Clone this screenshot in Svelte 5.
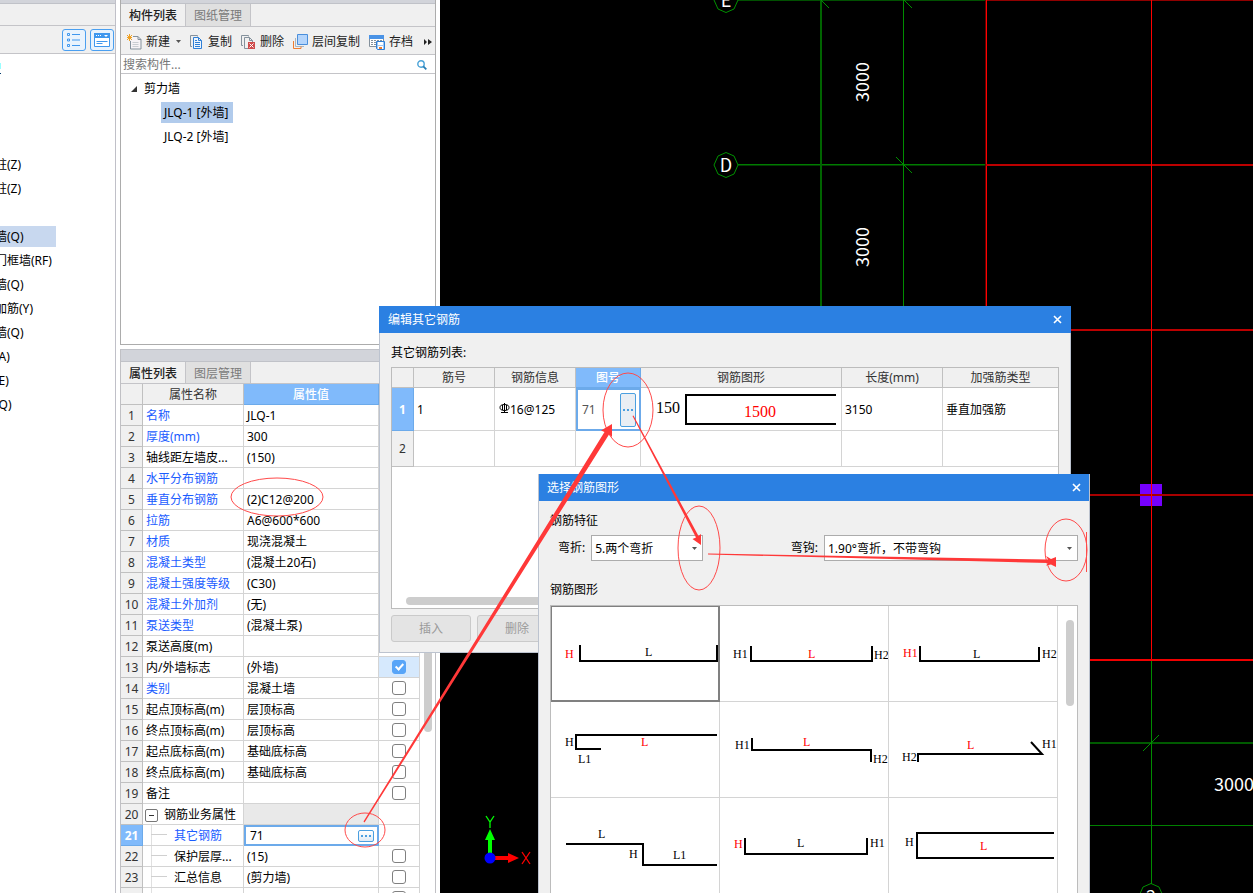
<script>
  const categories = [
    { name: '柱(Z)' },
    { name: '柱(Z)' },
    { name: '' },
    { name: '墙(Q)', active: true },
    { name: '门框墙(RF)' },
    { name: '墙(Q)' },
    { name: '加筋(Y)' },
    { name: '墙(Q)' },
    { name: '(A)' },
    { name: '(E)' },
    { name: '(Q)' }
  ];

  const properties = [
    { name: '名称', value: 'JLQ-1', blue: true },
    { name: '厚度(mm)', value: '300', blue: true },
    { name: '轴线距左墙皮...', value: '(150)' },
    { name: '水平分布钢筋', value: '', blue: true },
    { name: '垂直分布钢筋', value: '(2)C12@200', blue: true },
    { name: '拉筋', value: 'A6@600*600', blue: true },
    { name: '材质', value: '现浇混凝土', blue: true },
    { name: '混凝土类型', value: '(混凝土20石)', blue: true },
    { name: '混凝土强度等级', value: '(C30)', blue: true },
    { name: '混凝土外加剂', value: '(无)', blue: true },
    { name: '泵送类型', value: '(混凝土泵)', blue: true },
    { name: '泵送高度(m)', value: '' },
    { name: '内/外墙标志', value: '(外墙)', check: true, checked: true },
    { name: '类别', value: '混凝土墙', blue: true, check: true },
    { name: '起点顶标高(m)', value: '层顶标高', check: true },
    { name: '终点顶标高(m)', value: '层顶标高', check: true },
    { name: '起点底标高(m)', value: '基础底标高', check: true },
    { name: '终点底标高(m)', value: '基础底标高', check: true },
    { name: '备注', value: '', check: true },
    { name: '钢筋业务属性', value: '', group: true },
    { name: '其它钢筋', value: '71', blue: true, child: true, editing: true },
    { name: '保护层厚...', value: '(15)', child: true, check: true },
    { name: '汇总信息', value: '(剪力墙)', child: true, check: true },
    { name: '', value: '', child: true, check: true }
  ];

  // Each label is [text, x, baseline, isRed]
  const shapes = [
    { d: 'M29 39V55H166V39', labels: [['H', 14, 52, true], ['L', 94, 50]] },
    { d: 'M31 40V55H152V40', labels: [['H1', 13, 52], ['L', 88, 52, true], ['H2', 154, 53]] },
    { d: 'M31 40V55H150V41', labels: [['H1', 14, 51, true], ['L', 84, 52], ['H2', 153, 52]] },
    { d: 'M166 33H25V47H50', labels: [['H', 14, 44], ['L', 90, 44, true], ['L1', 27, 61]] },
    { d: 'M32 36V48H151V60', labels: [['H1', 15, 47], ['L', 83, 44, true], ['H2', 153, 61]] },
    { d: 'M29 60V52H153L142 40', labels: [['H2', 13, 59], ['L', 78, 47, true], ['H1', 153, 46]] },
    { d: 'M15 46H92V67H166', labels: [['L', 47, 40], ['H', 78, 60], ['L1', 122, 61]] },
    { d: 'M25 40V56H147V40', labels: [['H', 14, 50, true], ['L', 77, 49], ['H1', 150, 49]] },
    { d: 'M165 35H28V60H165', labels: [['H', 16, 48], ['L', 91, 52, true]] }
  ];

  let selected = $state(0);
</script>

<div class="app">
  <aside class="modules">
    <div class="strip short"></div>
    <div class="module-tabs"></div>
    <div class="module-tools">
      <button class="view" aria-label="列表视图">
        <svg width="14" height="14" viewBox="0 0 14 14" fill="none" stroke="#3f97ee">
          <path d="M.5 .5h2v2h-2zM.5 6h2v2h-2zM.5 11.5h2v2h-2zM5 1.5h8M5 7h8M5 12.5h8" />
        </svg>
      </button>
      <button class="view" aria-label="面板视图">
        <svg width="16" height="14" viewBox="0 0 16 14">
          <path d="M.5 .5h15v13H.5z" fill="#fff" stroke="#3f97ee" />
          <path d="M0 0h16v5H0z" fill="#3f97ee" />
          <path d="M2.500 8.500h11M2.500 10.500h6" stroke="#3f97ee" />
          <path d="M2 2h1v1H2zM4 2h1v1H4zM6 2h1v1H6zM10 2h4l-2 2z" fill="#fff" />
        </svg>
      </button>
    </div>
    <div class="mark"></div>
    <ul class="categories">
      {#each categories as item}
        <li class:active={item.active}><span>{item.name}</span></li>
      {/each}
    </ul>
  </aside>

  <div class="panels">
    <section class="panel components">
      <div class="strip short"></div>
      <div class="tabs">
        <button class="tab on">构件列表</button>
        <button class="tab">图纸管理</button>
      </div>
      <div class="toolbar">
        <button>
          <svg width="15" height="16" viewBox="0 0 15 16" fill="none">
            <path d="M6 2.500h5l3 3v9.500H3.500V7" fill="#f6f3f6" stroke="#84919c" />
            <path d="M11 2.500v3h3" stroke="#84919c" />
            <path d="M5.500 8.500h6M5.500 10.500h6M5.500 12.500h6" stroke="#c9cdd2" />
            <path d="M0 1l5 5M5 1l-5 5M2.500 0v7M0 3.500h5" stroke="#f0a020" stroke-width="1" />
          </svg>
          新建
          <svg class="drop" width="5" height="3" viewBox="0 0 5 3"><path d="M0 0h5L2.500 3z" fill="#555" /></svg>
        </button>
        <button>
          <svg width="14" height="16" viewBox="0 0 14 16" fill="none">
            <path d="M2 12.500H.5V1.500h7v1" stroke="#84919c" />
            <path d="M3.500 3.500h5l3 3v8h-8z" fill="#eef5fd" stroke="#2e7fd6" />
            <path d="M5 6.500h2M5 8.500h5M5 10.500h5M5 12.500h5M8.500 3.500v3h3" stroke="#2e7fd6" />
          </svg>
          复制
        </button>
        <button>
          <svg width="15" height="16" viewBox="0 0 15 16" fill="none">
            <path d="M2 11.500H.5V1.500h7v1" stroke="#84919c" />
            <path d="M7 14.500H3.500v-11h5l3 3V8M8.500 3.500v3h3" stroke="#84919c" />
            <path d="M7 8h7v7H7z" fill="#cf4b4b" />
            <path d="M8.500 9.500l4 4M12.500 9.500l-4 4" stroke="#fff" />
          </svg>
          删除
        </button>
        <button>
          <svg width="15" height="16" viewBox="0 0 15 16" fill="none">
            <path d="M4.500 .5h10v10h-10z" fill="#b5d5fb" stroke="#4a8fdc" />
            <path d="M2.500 4v8.500H11" stroke="#a9b4bf" />
            <path d="M.5 7v7.500H8v-2" stroke="#ee7d31" />
          </svg>
          层间复制
        </button>
        <button>
          <svg width="16" height="16" viewBox="0 0 16 16" fill="none">
            <path d="M.5 1.500h14v11H.5z" fill="#fff" stroke="#84919c" />
            <path d="M0 1h15v4H0z" fill="#4a93e6" />
            <path d="M2 6.500h2M2 8.500h2M2 10.500h2M5 6.500h2M5 8.500h2M5 10.500h2M8 6.500h2M11 6.500h2" stroke="#84919c" />
            <path d="M7.500 7.500h8v8h-7l-1-1z" fill="#9cc6f5" stroke="#2e7fd6" />
            <path d="M9 8h5v3H9z" fill="#fff" />
            <path d="M9 12h5v3H9z" fill="#fff" />
            <path d="M10 13h3v2h-3z" fill="#ee7d31" />
          </svg>
          存档
        </button>
        <button class="more" aria-label="更多">
          <svg width="8" height="6" viewBox="0 0 8 6"><path d="M0 0l3 3-3 3zM4 0l4 3-4 3z" fill="#222" /></svg>
        </button>
      </div>
      <label class="search">
        <input type="text" placeholder="搜索构件..." aria-label="搜索构件" />
        <svg width="10" height="10" viewBox="0 0 10 10" fill="none">
          <circle cx="4" cy="4" r="3.200" stroke="#4aa3d8" stroke-width="1.400" />
          <path d="M6.300 6.300L9.300 9.300" stroke="#2a7fb5" stroke-width="1.800" />
        </svg>
      </label>
      <div class="tree">
        <div class="branch">
          <svg width="6" height="6" viewBox="0 0 6 6"><path d="M6 0v6H0z" fill="#333" /></svg>
          剪力墙
        </div>
        <button class="leaf on">JLQ-1 [外墙]</button>
        <button class="leaf">JLQ-2 [外墙]</button>
      </div>
    </section>

    <section class="panel attributes">
      <div class="strip"></div>
      <div class="tabs">
        <button class="tab on">属性列表</button>
        <button class="tab">图层管理</button>
      </div>
      <div class="sheet">
        <table class="props">
          <colgroup><col class="c-no" /><col class="c-name" /><col class="c-value" /><col class="c-check" /></colgroup>
          <thead>
            <tr><th></th><th>属性名称</th><th class="hot">属性值</th><th></th></tr>
          </thead>
          <tbody>
            {#each properties as row, i}
              <tr>
                <th class:hot={row.editing}>{i < 23 ? i + 1 : ''}</th>
                <td class:blue={row.blue} class:child={row.child}>
                  {#if row.group}<button class="fold" aria-label="折叠"></button>{/if}{row.name}
                </td>
                <td class:shade={row.group} class:editing={row.editing}>
                  {#if row.editing}
                    <div class="edit">
                      <span>{row.value}</span>
                      <button class="dots" aria-label="选择"><i></i><i></i><i></i></button>
                    </div>
                  {:else}
                    {row.value}
                  {/if}
                </td>
                <td class="tick" class:lit={row.checked}>
                  {#if row.check}
                    <input type="checkbox" checked={row.checked} aria-label={row.name || '附加'} />
                  {/if}
                </td>
              </tr>
            {/each}
          </tbody>
        </table>
        <div class="vbar"><div class="thumb"></div></div>
      </div>
    </section>
  </div>

  <main class="drawing">
    <svg width="100%" height="100%">
      <g transform="translate(-440 0)" shape-rendering="crispEdges">
        <path d="M738 0h248v1H738z" fill="#005000" />
        <path d="M986 0h3000v1H986z" fill="#900000" />
        <path d="M738 164h248v1H738z" fill="#007c00" />
        <path d="M738 165h248v1H738z" fill="#003c00" />
        <path d="M820 0h2v600h-2z" fill="#006400" />
        <path d="M903 0h1v600h-1z" fill="#008c00" />
        <path d="M1090 742h3000v2H1090z" fill="#005a00" />
        <path d="M1090 825h3000v1H1090z" fill="#008000" />
        <path d="M1151 660h1v224h-1z" fill="#008c00" />
        <path d="M985 0h1v600h-1z" fill="#600000" />
        <path d="M986 0h1v600h-1z" fill="#ff0000" />
        <path d="M986 164h3000v2H986zM1000 329h3000v2H1000z" fill="#bc0000" />
        <path d="M1140 484h22v22h-22z" fill="#7600ff" />
        <path d="M1000 494h3000v2H1000z" fill="#a80000" />
        <path d="M1151 0h1v660h-1z" fill="#ff0000" />
        <path d="M1000 659h3000v2H1000z" fill="#f00000" />
      </g>
      <g transform="translate(-440 0)" fill="none" stroke="#009000">
        <path d="M821 0l8 8M904 0l8 8M896 157l16 16M1143 751l16-16" />
        <path d="M726 152.500l8 3.500 4 9-4 9-8 3.500-8-3.500-4-9 4-9z" />
        <path d="M726-12.500l8 3.500 4 9-4 9-8 3.500-8-3.500-4-9 4-9z" />
        <path d="M1151 883.500l8 3.500 4 9-4 9-8 3.500-8-3.500-4-9 4-9z" />
      </g>
      <g transform="translate(-440 0)" class="cad">
        <text x="726" y="7" text-anchor="middle">E</text>
        <text x="726" y="172" text-anchor="middle">D</text>
        <text x="1151" y="903" text-anchor="middle">2</text>
        <text x="1214" y="791">3000</text>
        <text transform="translate(869 102) rotate(-90)">3000</text>
        <text transform="translate(869 267) rotate(-90)">3000</text>
      </g>
      <g transform="translate(-440 0)">
        <path d="M488 858V840h-3l5-11 5 11h-3v18z" fill="#0f0" />
        <path d="M490 856h18v-3l11 5-11 5v-3h-18z" fill="red" />
        <circle cx="490" cy="858" r="5.500" fill="#00f" />
        <path d="M486 816l4 6 4-6M490 822v6" fill="none" stroke="#0f0" stroke-width="1.300" />
        <path d="M522 852l8 12M530 852l-8 12" fill="none" stroke="red" stroke-width="1.300" />
      </g>
    </svg>
  </main>

  <section class="window rebar" aria-label="编辑其它钢筋">
    <header>
      <span>编辑其它钢筋</span>
      <button aria-label="关闭"><svg width="9" height="9" viewBox="0 0 9 9"><path d="M1 1l7 7M8 1L1 8" stroke="#fff" stroke-width="1.600" /></svg></button>
    </header>
    <div class="body">
      <p>其它钢筋列表:</p>
      <div class="list">
        <table class="bars">
          <colgroup><col class="b-no" /><col class="b-id" /><col class="b-id" /><col class="b-fig" /><col class="b-shape" /><col class="b-len" /><col /></colgroup>
          <thead>
            <tr><th></th><th>筋号</th><th>钢筋信息</th><th class="hot">图号</th><th>钢筋图形</th><th>长度(mm)</th><th>加强筋类型</th></tr>
          </thead>
          <tbody>
            <tr class="first">
              <th class="hot">1</th>
              <td>1</td>
              <td class="steel">
                <svg width="11" height="11" viewBox="0 0 11 11" fill="none" stroke="#000"><ellipse cx="5.500" cy="4.500" rx="4.500" ry="3" /><path d="M5.500 0v10M3.500 2v5M7.500 2v5M2 9.500h7" /></svg>16@125
              </td>
              <td class="editing">
                <div class="edit">
                  <span>71</span>
                  <button class="dots tall" aria-label="选择图号"><i></i><i></i><i></i></button>
                </div>
              </td>
              <td class="figure">
                <svg width="200" height="42">
                  <path d="M195 7H45V36H195" fill="none" stroke="#000" stroke-width="2" />
                  <text x="15" y="25">150</text>
                  <text x="103" y="29" class="red">1500</text>
                </svg>
              </td>
              <td>3150</td>
              <td>垂直加强筋</td>
            </tr>
            <tr class="second"><th>2</th><td></td><td></td><td></td><td></td><td></td><td></td></tr>
          </tbody>
        </table>
        <div class="hbar"></div>
      </div>
      <div class="actions">
        <button disabled>插入</button>
        <button disabled>删除</button>
      </div>
    </div>
  </section>

  <section class="window picker" aria-label="选择钢筋图形">
    <header>
      <span>选择钢筋图形</span>
      <button aria-label="关闭"><svg width="9" height="9" viewBox="0 0 9 9"><path d="M1 1l7 7M8 1L1 8" stroke="#fff" stroke-width="1.600" /></svg></button>
    </header>
    <div class="body">
      <p>钢筋特征</p>
      <div class="filters">
        <label for="bend">弯折:</label>
        <div class="combo narrow">
          <select id="bend"><option>5.两个弯折</option></select>
          <svg width="5" height="3" viewBox="0 0 5 3"><path d="M0 0h5L2.500 3z" fill="#555" /></svg>
        </div>
        <label for="hook" class="push">弯钩:</label>
        <div class="combo wide">
          <select id="hook"><option>1.90°弯折，不带弯钩</option></select>
          <svg width="5" height="3" viewBox="0 0 5 3"><path d="M0 0h5L2.500 3z" fill="#555" /></svg>
        </div>
      </div>
      <p>钢筋图形</p>
      <div class="gallery">
        <div class="cells">
          {#each shapes as shape, i}
            <button class="cell" class:picked={selected === i} onclick={() => (selected = i)} aria-label={'图形' + (i + 1)}>
              <svg width="168" height="95">
                <path d={shape.d} fill="none" stroke="#000" stroke-width="2" />
                {#each shape.labels as [text, x, y, red]}
                  <text {x} {y} class:red>{text}</text>
                {/each}
              </svg>
            </button>
          {/each}
        </div>
        <div class="vbar"><div class="thumb"></div></div>
      </div>
    </div>
  </section>

  <svg class="notes" width="100%" height="100%" fill="none" stroke="#ff4a4a">
    <ellipse cx="277" cy="497" rx="46" ry="19" />
    <ellipse cx="365" cy="830" rx="20" ry="17" />
    <ellipse cx="628" cy="410" rx="25" ry="37" />
    <ellipse cx="699" cy="548" rx="21" ry="42" />
    <ellipse cx="1066" cy="550" rx="21" ry="31" />
    <path d="M1086.500 532v40" />
    <g fill="#ff3838" stroke="none">
      <path d="M363.500 821.500L604.500 432 601 430.500 612 424 612 437 609 434.500 364.500 822.500z" />
      <path d="M632.500 416L696 537.500 692.500 539 701 545 701 534 698.500 536 633.500 415.500z" />
      <path d="M708 553.500L1048 559.500 1046 556 1051 559 1056 557 1056 567 1051 564.500 1046 565.500 1048 563 708 554.500z" />
    </g>
  </svg>
</div>

<style>
  :global(body) {
    margin: 0;
    overflow: hidden;
  }
  .app {
    position: relative;
    display: flex;
    height: 100vh;
    overflow: hidden;
    background: #fff;
    color: #000;
    font: 12px/18px "Noto Sans", "Noto Sans CJK SC", sans-serif;
  }
  .app *,
  .app *::after {
    box-sizing: border-box;
  }
  button,
  input,
  select {
    margin: 0;
    padding: 0;
    border: 0;
    background: none;
    color: inherit;
    font: inherit;
  }
  p,
  ul {
    margin: 0;
    padding: 0;
    list-style: none;
  }
  svg {
    display: block;
    flex: none;
  }
  table {
    border-collapse: separate;
    border-spacing: 0;
    table-layout: fixed;
  }

  .strip {
    height: 13px;
    background: #d2d4da;
    border: solid #c0c2c8;
    border-width: 1px 0;
  }
  .strip.short {
    height: 4px;
    border-top: 0;
  }

  .modules {
    flex: 0 0 116px;
    overflow: hidden;
    border-right: 1px solid #c0c0c8;
  }
  .module-tabs {
    height: 22px;
    background: #f0f0f0;
    border-bottom: 1px solid #c4c4c8;
  }
  .module-tools {
    display: flex;
    justify-content: flex-end;
    align-items: center;
    gap: 4px;
    height: 28px;
    padding-right: 1px;
    background: #f0f0f0;
    border-bottom: 1px solid #c4c4c8;
  }
  .view {
    display: grid;
    place-items: center;
    width: 24px;
    height: 22px;
    border: 1px solid #4a9ff0;
    border-radius: 3px;
    background: #e9f3fd;
  }
  .mark {
    width: 1px;
    height: 11px;
    margin-top: 9px;
    background: linear-gradient(#9ff 6px, transparent 6px, transparent 10px, #003a6b 10px);
  }
  .categories {
    padding-top: 79px;
  }
  .categories li {
    height: 24px;
    line-height: 24px;
    white-space: nowrap;
  }
  .categories span {
    display: inline-block;
    margin-left: -5px;
  }
  .categories .active {
    width: 56px;
    height: 21px;
    margin: 1px 0 2px;
    line-height: 21px;
    background: #c8d8ef;
  }

  .panels {
    display: flex;
    flex: 0 0 324px;
    flex-direction: column;
    gap: 4px;
    padding: 0 4px;
  }
  .panel {
    display: flex;
    flex-direction: column;
    border: 1px solid #acacac;
    border-top: 0;
  }
  .components {
    flex: 0 0 345px;
  }
  .attributes {
    flex: 1;
    min-height: 0;
    overflow: hidden;
    border-bottom: 0;
    border-color: #c0c0c4;
  }
  .tabs {
    display: flex;
    height: 23px;
    background: #f0f0f0;
    border-bottom: 1px solid #c4c4c8;
  }
  .attributes .tabs {
    height: 22px;
  }
  .tab {
    width: 66px;
    padding-top: 2px;
    background: #e0e0e0;
    border: solid #c4c4c8;
    border-width: 0 1px;
    color: #7a7a7a;
    line-height: 20px;
  }
  .tab.on {
    width: 64px;
    background: #f0f0f0;
    border: 0;
    color: #222;
    font-weight: 500;
  }
  .toolbar {
    display: flex;
    align-items: center;
    gap: 9px;
    height: 28px;
    padding: 2px 3px 0 6px;
    background: #f0f0f0;
    border-bottom: 1px solid #c4c4c8;
    color: #222;
    white-space: nowrap;
  }
  .toolbar button {
    display: flex;
    align-items: center;
    gap: 4px;
  }
  .toolbar .drop {
    margin-left: 2px;
  }
  .toolbar .more {
    margin-left: auto;
  }
  .search {
    display: flex;
    align-items: center;
    height: 19px;
    padding: 1px 8px 0 2px;
    border-bottom: 1px solid #c4c4c8;
  }
  .search input {
    flex: 1;
    min-width: 0;
    outline: 0;
  }
  .search input::placeholder {
    color: #777;
    opacity: 1;
  }
  .tree {
    display: flex;
    flex: 1;
    flex-direction: column;
    align-items: flex-start;
    gap: 3px;
    padding: 4px 0 0 10px;
  }
  .branch {
    display: flex;
    align-items: center;
    gap: 7px;
    height: 21px;
  }
  .leaf {
    height: 21px;
    margin-left: 30px;
    padding: 0 5px 0 3px;
  }
  .leaf.on {
    background: #b1cbec;
  }

  .sheet {
    display: flex;
    flex: 1;
    min-height: 0;
  }
  .props {
    width: 299px;
    height: min-content;
  }
  .c-no {
    width: 22px;
  }
  .c-name {
    width: 101px;
  }
  .c-value {
    width: 135px;
  }
  .c-check {
    width: 41px;
  }
  th,
  td {
    padding: 0;
    border: solid #d4d4d4;
    border-width: 0 1px 1px 0;
    font-weight: 400;
    text-align: left;
    white-space: nowrap;
  }
  th {
    background: #f0f0f0;
    border-color: #c0c0c0;
    color: #333;
    text-align: center;
  }
  th.hot {
    background: #80bafb;
    border-color: #6caaea;
    color: #fff;
    font-weight: 500;
  }
  tbody th.hot {
    font-weight: 700;
  }
  .props th,
  .props td {
    height: 21px;
    padding-top: 2px;
    line-height: 18px;
  }
  .props td {
    padding-left: 3px;
  }
  .props .blue {
    color: #1a5cff;
  }
  .props .child {
    padding-left: 31px;
    background: linear-gradient(#d0d0d0, #d0d0d0) 8px 9px / 16px 1px no-repeat, linear-gradient(#e0e0e0, #e0e0e0) 8px 0 / 1px 21px no-repeat;
  }
  .props .shade {
    background: #e9e9e9;
  }
  .props .editing,
  .bars .editing {
    padding: 0;
    border: 0;
  }
  .edit {
    display: flex;
    align-items: center;
    justify-content: space-between;
    height: 21px;
    padding: 0 3px 0 4px;
    border: 2px solid #6caaea;
  }
  .dots {
    display: flex;
    align-items: center;
    justify-content: center;
    gap: 2px;
    width: 16px;
    height: 12px;
    border: 1px solid #4a9fe0;
    border-radius: 2px;
    background: linear-gradient(#fff, #dfeaf5);
  }
  .dots.tall {
    height: 34px;
    background: #e9eef4;
  }
  .dots i {
    width: 2px;
    height: 2px;
    background: #4a9fe0;
  }
  .fold {
    position: relative;
    width: 13px;
    height: 13px;
    margin: 0 6px 0 -1px;
    border: 1px solid #777;
    border-radius: 2px;
    vertical-align: -2px;
  }
  .fold::after {
    content: "";
    position: absolute;
    top: 5px;
    left: 3px;
    width: 5px;
    height: 1px;
    background: #333;
  }
  .props .tick {
    padding: 0;
    text-align: center;
  }
  .props .lit {
    background: #d6e9fd;
  }
  input[type="checkbox"] {
    display: block;
    width: 14px;
    height: 14px;
    margin: 0 auto;
    appearance: none;
    background: #fff;
    border: 1px solid #808080;
    border-radius: 3px;
  }
  input[type="checkbox"]:checked {
    background: #58a5f8;
    border-color: #58a5f8;
  }
  input[type="checkbox"]:checked::after {
    content: "";
    display: block;
    width: 5px;
    height: 8px;
    margin: 1px 0 0 4px;
    border: solid #fff;
    border-width: 0 2px 2px 0;
    transform: rotate(42deg);
  }
  .attributes .vbar {
    flex: 1;
    padding: 0 3px 0 4px;
  }
  .thumb {
    background: #cdcdcd;
    border-radius: 4px;
  }
  .attributes .thumb {
    height: 348px;
  }

  .drawing {
    flex: 1;
    min-width: 0;
    overflow: hidden;
    background: #000;
  }
  .cad text {
    fill: #fff;
    font: 18px "Noto Sans CJK SC", sans-serif;
  }

  .window {
    position: absolute;
    display: flex;
    flex-direction: column;
    background: #f0f0f0;
    border: 1px solid #bcc3cf;
    border-top: 0;
  }
  .window header {
    display: flex;
    align-items: center;
    justify-content: space-between;
    flex: none;
    height: 27px;
    margin: 0 -1px;
    padding: 0 9px;
    background: #2b80e2;
    color: #fff;
  }
  .body {
    display: flex;
    flex: 1;
    flex-direction: column;
    min-height: 0;
    padding: 11px 11px 10px;
  }
  .rebar {
    top: 306px;
    left: 379px;
    width: 692px;
  }
  .list {
    display: flex;
    flex-direction: column;
    justify-content: space-between;
    height: 242px;
    margin-top: 5px;
    background: #fff;
    border: 1px solid #bcbcbc;
  }
  .bars {
    width: 100%;
  }
  .b-no {
    width: 22px;
  }
  .b-id {
    width: 81px;
  }
  .b-fig {
    width: 65px;
  }
  .b-shape {
    width: 201px;
  }
  .b-len {
    width: 101px;
  }
  .bars th,
  .bars td {
    height: 20px;
    padding-top: 1px;
    line-height: 18px;
  }
  .bars td {
    padding-left: 3px;
  }
  .bars .steel {
    padding-left: 4px;
  }
  .bars .steel svg {
    display: inline-block;
  }
  .bars .figure,
  .bars .editing {
    padding: 0;
  }
  .bars tr > :last-child {
    border-right: 0;
  }
  .bars .first > * {
    height: 43px;
  }
  .bars .second > * {
    height: 36px;
  }
  .bars .edit {
    height: 43px;
    color: #555;
  }
  .figure text {
    font: 16px "Liberation Serif", serif;
  }
  .red {
    fill: red;
  }
  .hbar {
    width: 400px;
    height: 8px;
    margin: 0 0 3px 14px;
    background: #cdcdcd;
    border-radius: 4px;
  }
  .actions {
    display: flex;
    gap: 6px;
    margin-top: 6px;
  }
  .actions button {
    width: 80px;
    height: 27px;
    background: #e4e4e4;
    border: 1px solid #cacaca;
    border-radius: 3px;
    color: #9a9a9a;
  }

  .picker {
    top: 474px;
    bottom: -24px;
    left: 538px;
    width: 552px;
    overflow: hidden;
  }
  .picker header {
    margin: 0 -1px;
  }
  .filters {
    display: flex;
    align-items: center;
    gap: 6px;
    margin: 5px 0 20px;
    padding-left: 8px;
  }
  .push {
    margin-left: auto;
  }
  .combo {
    position: relative;
    height: 26px;
  }
  .combo.narrow {
    width: 112px;
  }
  .combo.wide {
    width: 254px;
  }
  .combo select {
    width: 100%;
    height: 100%;
    padding: 1px 20px 0 3px;
    appearance: none;
    background: #fff;
    border: 1px solid #acacac;
  }
  .combo svg {
    position: absolute;
    top: 12px;
    right: 6px;
    pointer-events: none;
  }
  .gallery {
    display: flex;
    flex: 1;
    min-height: 0;
    margin-top: 6px;
    overflow: hidden;
    background: #fff;
    border: 1px solid #bcbcbc;
  }
  .cells {
    display: grid;
    grid-template-columns: repeat(3, 169px);
    grid-auto-rows: 96px;
  }
  .cell {
    position: relative;
    border: solid #d4d4d4;
    border-width: 0 1px 1px 0;
  }
  .cell.picked::after {
    content: "";
    position: absolute;
    inset: 0 -1px -1px 0;
    border: solid #808080;
    border-width: 1px 2px 2px 1px;
  }
  .cell text {
    font: 12px "Liberation Serif", serif;
  }
  .picker .vbar {
    flex: 1;
    padding: 14px 3px 0 8px;
  }
  .picker .thumb {
    height: 86px;
  }

  .notes {
    position: absolute;
    inset: 0;
    pointer-events: none;
  }
</style>
